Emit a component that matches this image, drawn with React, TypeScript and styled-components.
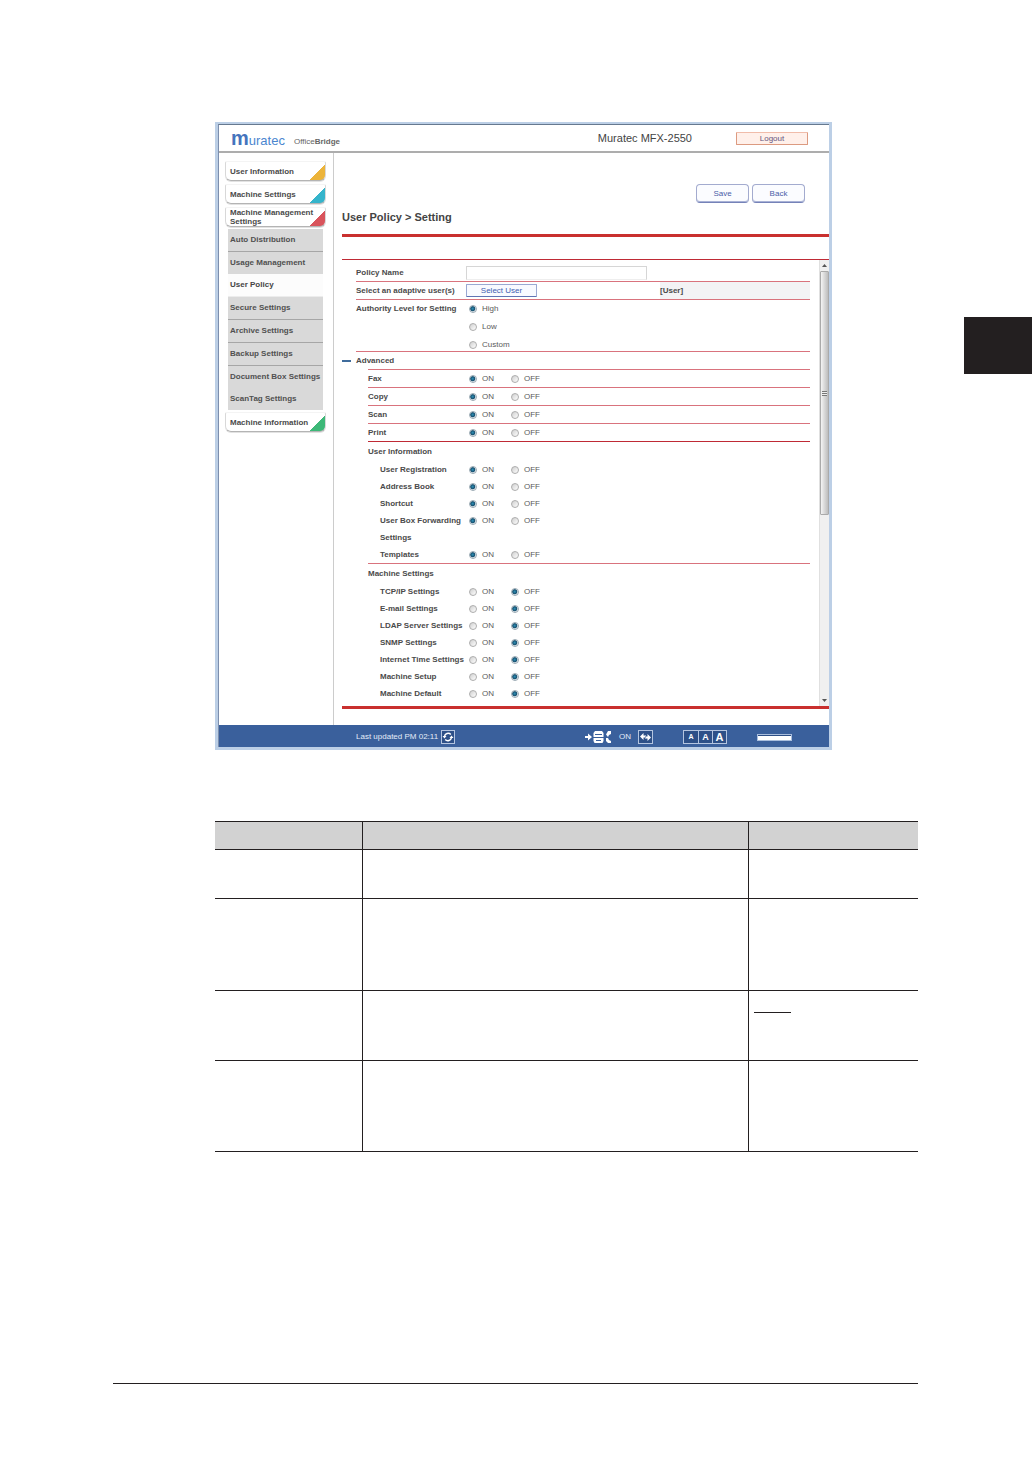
import React, { useState } from "react";
import styled, { createGlobalStyle, css } from "styled-components";

const GlobalStyle = createGlobalStyle`
  *, *::before, *::after { box-sizing: border-box; }
  body {
    margin: 0;
    background: #fff;
    color: #4a4a4a;
    font-family: "Liberation Sans", Arial, sans-serif;
    font-size: 8px;
    line-height: 12px;
  }
  button, input { font: inherit; color: inherit; margin: 0; padding: 0; }
  button { cursor: pointer; }
`;

const Page = styled.div`
  display: grid;
  grid-template-columns: minmax(0, 1fr) 68px;
  column-gap: 46px;
  padding-left: 113px;
  min-height: 100vh;
`;

const Sheet = styled.main`
  padding-top: 122px;
`;

const ChapterTab = styled.div`
  height: 57px;
  margin-top: 317px;
  background: #231f20;
`;

const Figure = styled.section`
  margin: 0 86px 71px 102px;
  border: 3px solid #bccfe6;
  border-top-width: 2px;
`;

const Window = styled.div`
  border-top: 1px solid #66798f;
  border-left: 1px solid #7d8fae;
`;

const Header = styled.header`
  display: flex;
  align-items: center;
  height: 28px;
  padding: 0 21px 0 12px;
  border-bottom: 2px solid #adadad;
`;

const Logo = styled.a`
  display: flex;
  align-items: baseline;
  height: 20px;
  color: #4a86cf;
  font-size: 13px;
  line-height: 20px;
  text-decoration: none;
`;

const LogoInitial = styled.span`
  font-size: 20px;
  font-weight: bold;
  color: #4574bd;
`;

const Product = styled.span`
  padding: 8px 0 0 9px;
  color: #666;
`;

const Model = styled.span`
  margin-left: auto;
  font-size: 11px;
  color: #444;
`;

const LogoutButton = styled.button`
  width: 72px;
  height: 13px;
  margin-left: 44px;
  border: 1px solid #dc9a80;
  border-top-color: #f0bcaa;
  border-radius: 1px;
  background: #fff0ea;
  color: #66557c;
  line-height: 11px;
`;

const Body = styled.div`
  display: grid;
  grid-template-columns: 115px minmax(0, 1fr);
`;

const Sidebar = styled.nav`
  display: flex;
  flex-direction: column;
  gap: 3px;
  padding: 8px 7px 0 6px;
  border-right: 1px solid #ccc;
`;

const TabLink = styled.a<{ $accent: string }>`
  display: flex;
  align-items: center;
  height: 20px;
  padding-left: 4px;
  border: 1px solid #d8d8d8;
  border-top-color: #f4f4f4;
  border-bottom-color: #b4b4b4;
  border-radius: 2px 2px 6px 6px;
  background: linear-gradient(135deg, transparent 50%, ${(p) => p.$accent} 52%) right bottom / 17px 15px
    no-repeat;
  box-shadow: 0 1px 0 #e2e2e2;
  color: #4a4a4a;
  font-weight: bold;
  line-height: 9px;
  text-decoration: none;
`;

const SubMenu = styled.div`
  display: flex;
  flex-direction: column;
  margin: -1px 3px -1px 3px;
`;

const SubLink = styled.a<{ $ruled?: boolean; $current?: boolean }>`
  padding-left: 2px;
  background: ${(p) => (p.$current ? "#fcfcfc" : "#d9d9d9")};
  color: ${(p) => (p.$current ? "#444" : "#505050")};
  font-weight: bold;
  line-height: 22px;
  text-decoration: none;
  ${(p) =>
    p.$ruled &&
    css`
      border-bottom: 1px solid ${p.$current ? "#ececec" : "#a6a6a6"};
    `}
`;

const Content = styled.div`
  padding: 31px 0 16px 8px;
`;

const Actions = styled.div`
  display: flex;
  justify-content: flex-end;
  gap: 3px;
  padding-right: 24px;
`;

const ActionButton = styled.button`
  width: 53px;
  height: 19px;
  border: 1px solid #a3abcf;
  border-bottom-color: #7582b8;
  border-radius: 4px;
  background: #fbfcff;
  box-shadow: inset 0 -1px 0 #a9b2d6;
  color: #4a5da8;
`;

const Title = styled.h1`
  margin: 7px 0 10px;
  font-size: 11px;
  line-height: 14px;
  color: #444;
`;

const Bar = styled.div`
  height: 3px;
  background: #c9302f;
`;

const Pane = styled.div`
  display: flex;
  min-height: 447px;
  margin-top: 22px;
  border-top: 1px solid #bf2a35;
`;

const Form = styled.form`
  flex: 1;
  min-width: 0;
  margin-right: 9px;
`;

const rule = css`
  border-bottom: 1px solid #d9737d;
`;

const Fields = styled.div`
  margin-left: 14px;
`;

const PolicyRow = styled.div`
  display: flex;
  align-items: center;
  height: 22px;
  padding-top: 4px;
  ${rule}
`;

const UserRow = styled.div`
  display: flex;
  align-items: center;
  height: 18px;
  ${rule}
`;

const Caption = styled.label`
  width: 110px;
  font-weight: bold;
`;

const TextBox = styled.input`
  width: 181px;
  height: 14px;
  border: 1px solid #d6d6d6;
  border-bottom-color: #eee;
  background: #fff;
`;

const SelectButton = styled.button`
  width: 71px;
  height: 13px;
  border: 1px solid #9aa8d2;
  border-bottom-color: #5f74b4;
  border-radius: 1px;
  background: #f8faff;
  color: #3f5db0;
  line-height: 10px;
`;

const UserHeading = styled.strong`
  width: 150px;
  margin-left: auto;
  background: #f3f3f5;
  line-height: 17px;
`;

const LevelRow = styled.div`
  display: flex;
  padding-top: 3px;
  ${rule}
`;

const LevelName = styled.span`
  width: 113px;
  font-weight: bold;
`;

const LevelList = styled.div`
  display: grid;
  gap: 6px;
`;

const Option = styled.label`
  display: flex;
  align-items: center;
  gap: 5px;
  min-width: 42px;
  color: #5a5a5a;
`;

const Radio = styled.input`
  appearance: none;
  width: 8px;
  height: 8px;
  border: 1px solid #adadad;
  border-radius: 50%;
  background: linear-gradient(135deg, #cfcfcf, #fff);
  &:checked {
    border-color: #9aa9b3;
    background: radial-gradient(circle at 45% 45%, #2f93ba 0, #17506f 45%, #e8eef2 65%);
  }
`;

const AdvancedRow = styled.div`
  display: flex;
  align-items: center;
  height: 17px;
  font-weight: bold;
`;

const Collapse = styled.button`
  display: flex;
  align-items: center;
  width: 14px;
  height: 12px;
  border: 0;
  background: none;
  &::before {
    content: "";
    width: 9px;
    height: 2px;
    background: #3f6c9c;
  }
`;

const Advanced = styled.div`
  margin-left: 26px;
`;

const Permission = styled.div<{ $ruled?: boolean }>`
  display: flex;
  align-items: flex-start;
  line-height: 17px;
  ${(p) =>
    p.$ruled &&
    css`
      border-top: 1px solid #d9737d;
    `}
`;

const PermissionName = styled.span<{ $nested?: boolean }>`
  flex: none;
  width: 101px;
  padding-left: ${(p) => (p.$nested ? "12px" : "0")};
  font-weight: bold;
`;

const Group = styled.div<{ $line: string }>`
  border-top: 1px solid ${(p) => p.$line};
`;

const GroupName = styled.h2`
  margin: 0;
  font-size: 8px;
  line-height: 19px;
`;

const ScrollTrack = styled.div`
  display: flex;
  flex-direction: column;
  align-items: center;
  width: 10px;
  border-left: 1px solid #e0e0e0;
  background: #f0f0f0;
`;

const ScrollArrow = styled.svg`
  flex: none;
  width: 9px;
  height: 11px;
`;

const ScrollThumb = styled.div`
  display: grid;
  place-items: center;
  width: 9px;
  height: 244px;
  margin-bottom: auto;
  border: 1px solid #aaa;
  border-radius: 1px;
  background: linear-gradient(90deg, #f4f4f4, #d8d8d8 50%, #bdbdbd);
  &::before {
    content: "";
    width: 5px;
    height: 5px;
    background: repeating-linear-gradient(#777 0 1px, #eee 1px 2px);
  }
`;

const Footer = styled.footer`
  display: flex;
  align-items: center;
  gap: 3px;
  height: 22px;
  padding: 2px 37px 0 137px;
  background: #3a609c;
  color: #e4ecf8;
`;

const IconButton = styled.button<{ $w: number }>`
  display: grid;
  place-items: center;
  width: ${(p) => p.$w}px;
  height: 14px;
  border: 1px solid #b4c5e0;
  background: #2d5088;
  color: #fff;
`;

const Status = styled.div`
  display: flex;
  align-items: center;
  margin-left: auto;
`;

const DeviceState = styled.div`
  display: flex;
  align-items: center;
  gap: 7px;
`;

const FontSizes = styled.div`
  display: flex;
  margin: 0 30px;
  border: 1px solid #b4c5e0;
`;

const FontSizeButton = styled.button<{ $size: number }>`
  width: 14px;
  height: 12px;
  border: 0;
  background: #2d5088;
  color: #fff;
  font-size: ${(p) => p.$size}px;
  font-weight: bold;
  line-height: 12px;
  & + & {
    border-left: 1px solid #b4c5e0;
  }
`;

const Meter = styled.div`
  width: 35px;
  height: 7px;
  border: 1px solid #a9bedd;
  background: #fff;
  box-shadow: inset 0 1px 0 #2d4f86;
`;

const Spec = styled.table`
  width: calc(100% - 102px);
  margin-left: 102px;
  border-spacing: 0;
  border-top: 1px solid #231f20;
  table-layout: fixed;
  th, td {
    padding: 0 5px;
    border-bottom: 1px solid #231f20;
    vertical-align: top;
  }
  th + th, td + td { border-left: 1px solid #231f20; }
  th { background: #d2d2d2; }
`;

const SpecColumn = styled.col<{ $w?: number }>`
  width: ${(p) => (p.$w ? `${p.$w}px` : "auto")};
`;

const SpecRow = styled.tr<{ $h: number }>`
  height: ${(p) => p.$h}px;
`;

const Underline = styled.div`
  width: 37px;
  height: 22px;
  border-bottom: 1px solid #231f20;
`;

const PageRule = styled.hr`
  margin: 231px 0 0;
  border: 0;
  border-top: 1px solid #231f20;
`;

type Choice = "ON" | "OFF";

function PermissionRow({ name, initial, nested }: { name: string; initial: Choice; nested?: boolean }) {
  const [value, setValue] = useState<Choice>(initial);
  return (
    <Permission $ruled={!nested} role="radiogroup" aria-label={name}>
      <PermissionName $nested={nested}>{name}</PermissionName>
      {(["ON", "OFF"] as Choice[]).map((choice) => (
        <Option key={choice}>
          <Radio type="radio" name={name} checked={value === choice} onChange={() => setValue(choice)} />
          {choice}
        </Option>
      ))}
    </Permission>
  );
}

const subMenu = [
  { label: "Auto Distribution", ruled: true },
  { label: "Usage Management" },
  { label: "User Policy", ruled: true, current: true },
  { label: "Secure Settings", ruled: true },
  { label: "Archive Settings", ruled: true },
  { label: "Backup Settings", ruled: true },
  { label: "Document Box Settings" },
  { label: "ScanTag Settings" },
];

const functions = ["Fax", "Copy", "Scan", "Print"];
const userInformation = ["User Registration", "Address Book", "Shortcut", "User Box Forwarding Settings", "Templates"];
const machineSettings = [
  "TCP/IP Settings",
  "E-mail Settings",
  "LDAP Server Settings",
  "SNMP Settings",
  "Internet Time Settings",
  "Machine Setup",
  "Machine Default",
];

export default function App() {
  const [level, setLevel] = useState("High");
  return (
    <>
      <GlobalStyle />
      <Page>
        <Sheet>
          <Figure>
            <Window>
              <Header>
                <Logo href="#">
                  <LogoInitial>m</LogoInitial>uratec
                </Logo>
                <Product>
                  Office<b>Bridge</b>
                </Product>
                <Model>Muratec MFX-2550</Model>
                <LogoutButton type="button">Logout</LogoutButton>
              </Header>
              <Body>
                <Sidebar>
                  <TabLink href="#" $accent="#ecb43a">User Information</TabLink>
                  <TabLink href="#" $accent="#35b4cb">Machine Settings</TabLink>
                  <TabLink href="#" $accent="#d9545c">Machine Management Settings</TabLink>
                  <SubMenu>
                    {subMenu.map((item) => (
                      <SubLink key={item.label} href="#" $ruled={item.ruled} $current={item.current}>
                        {item.label}
                      </SubLink>
                    ))}
                  </SubMenu>
                  <TabLink href="#" $accent="#3db878">Machine Information</TabLink>
                </Sidebar>
                <Content>
                  <Actions>
                    <ActionButton type="button">Save</ActionButton>
                    <ActionButton type="button">Back</ActionButton>
                  </Actions>
                  <Title>User Policy &gt; Setting</Title>
                  <Bar />
                  <Pane>
                    <Form>
                      <Fields>
                        <PolicyRow>
                          <Caption htmlFor="policy-name">Policy Name</Caption>
                          <TextBox id="policy-name" type="text" />
                        </PolicyRow>
                        <UserRow>
                          <Caption htmlFor="select-user">Select an adaptive user(s)</Caption>
                          <SelectButton id="select-user" type="button">Select User</SelectButton>
                          <UserHeading>[User]</UserHeading>
                        </UserRow>
                        <LevelRow role="radiogroup" aria-labelledby="level-name">
                          <LevelName id="level-name">Authority Level for Setting</LevelName>
                          <LevelList>
                            {["High", "Low", "Custom"].map((name) => (
                              <Option key={name}>
                                <Radio
                                  type="radio"
                                  name="level"
                                  checked={level === name}
                                  onChange={() => setLevel(name)}
                                />
                                {name}
                              </Option>
                            ))}
                          </LevelList>
                        </LevelRow>
                      </Fields>
                      <AdvancedRow>
                        <Collapse type="button" aria-label="Collapse" />
                        Advanced
                      </AdvancedRow>
                      <Advanced>
                        {functions.map((name) => (
                          <PermissionRow key={name} name={name} initial="ON" />
                        ))}
                        <Group $line="#bf2a35">
                          <GroupName>User Information</GroupName>
                          {userInformation.map((name) => (
                            <PermissionRow key={name} name={name} initial="ON" nested />
                          ))}
                        </Group>
                        <Group $line="#d9737d">
                          <GroupName>Machine Settings</GroupName>
                          {machineSettings.map((name) => (
                            <PermissionRow key={name} name={name} initial="OFF" nested />
                          ))}
                        </Group>
                      </Advanced>
                    </Form>
                    <ScrollTrack>
                      <ScrollArrow viewBox="0 0 9 11">
                        <path d="M2 7 4.500 4 7 7z" fill="#555" />
                      </ScrollArrow>
                      <ScrollThumb />
                      <ScrollArrow viewBox="0 0 9 11">
                        <path d="M2 4h5L4.500 7z" fill="#555" />
                      </ScrollArrow>
                    </ScrollTrack>
                  </Pane>
                  <Bar />
                </Content>
              </Body>
              <Footer>
                <span>Last updated PM 02:11</span>
                <IconButton type="button" $w={14} aria-label="Refresh">
                  <svg width="12" height="12" viewBox="0 0 12 12" fill="none" stroke="#fff" strokeWidth="1.500">
                    <path d="M2.500 5.500A3.700 3.700 0 0 1 8.800 3.500M9.500 6.500A3.700 3.700 0 0 1 3.200 8.500" />
                    <path d="M.5 5h4L2.500 7.500zM7.500 7h4L9.500 4.500z" fill="#fff" stroke="none" />
                  </svg>
                </IconButton>
                <Status>
                  <DeviceState>
                    <svg width="27" height="14" viewBox="0 0 27 14" fill="#fff">
                      <path d="M0 6h3V3.500L7 7 3 10.500V8H0z" />
                      <path d="M10 1h7l1.500 2v4h-10V3zM8.500 8h10v3l-1 2h-8l-1-2z" />
                      <path d="M10 4.500h7M11 10.500h5" stroke="#3a609c" />
                      <path d="M21 4.500 23 1h3v3l-2 1-1 2zM21 8h2l1 2 2 1v2h-3l-2-2z" />
                    </svg>
                    <span>ON</span>
                    <IconButton type="button" $w={15} aria-label="Switch">
                      <svg width="13" height="12" viewBox="0 0 13 12" fill="#fff">
                        <path d="M1 5.500 4.500 2v2.500H7v2H4.500V9zM12 6.500 8.500 3v2.500H6v2h2.500V10z" />
                      </svg>
                    </IconButton>
                  </DeviceState>
                  <FontSizes>
                    <FontSizeButton type="button" $size={7}>A</FontSizeButton>
                    <FontSizeButton type="button" $size={9}>A</FontSizeButton>
                    <FontSizeButton type="button" $size={11}>A</FontSizeButton>
                  </FontSizes>
                  <Meter />
                </Status>
              </Footer>
            </Window>
          </Figure>
          <Spec>
            <colgroup>
              <SpecColumn $w={147} />
              <SpecColumn />
              <SpecColumn $w={170} />
            </colgroup>
            <thead>
              <SpecRow $h={28}><th /><th /><th /></SpecRow>
            </thead>
            <tbody>
              <SpecRow $h={49}><td /><td /><td /></SpecRow>
              <SpecRow $h={92}><td /><td /><td /></SpecRow>
              <SpecRow $h={70}>
                <td />
                <td />
                <td><Underline /></td>
              </SpecRow>
              <SpecRow $h={91}><td /><td /><td /></SpecRow>
            </tbody>
          </Spec>
          <PageRule />
        </Sheet>
        <ChapterTab />
      </Page>
    </>
  );
}
